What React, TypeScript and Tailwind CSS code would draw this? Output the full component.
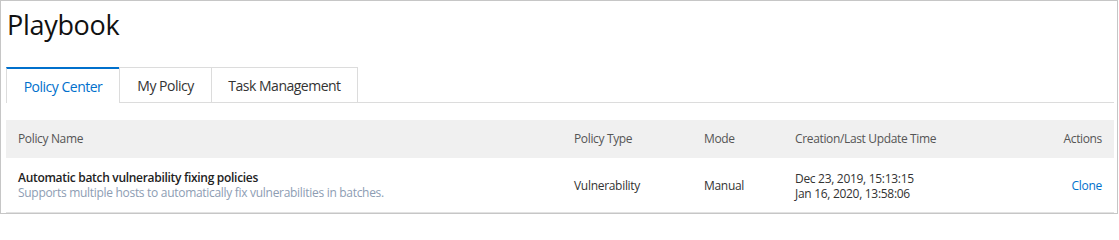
import React from "react";

const font = { fontFamily: '"Open Sans", "Noto Sans", sans-serif' };

export default function App() {
  return (
    <div
      className="w-[1118px] h-[214px] border border-[#c6c6c6] bg-white pl-[5px] pr-[3px] overflow-hidden"
      style={font}
    >
      <div className="h-[66px] pt-[4px]">
        <h1 className="text-[27px] leading-[40px] text-[#111] pl-[1px] tracking-[-0.3px]">Playbook</h1>
      </div>
      <div className="flex h-[36px] border-b border-[#dcdcdc]">
        <div className="w-[113px] h-[36px] border-t-2 border-t-[#0070cc] border-l border-l-[#dcdcdc] bg-white flex items-center justify-center text-[14px] tracking-[-0.5px] text-[#0070cc] -mb-px">
          Policy Center
        </div>
        <div className="w-[92px] h-[35px] border-t border-l border-[#dcdcdc] flex items-center justify-center text-[14px] tracking-[-0.5px] text-[#333]">
          My Policy
        </div>
        <div className="w-[147px] h-[35px] border-t border-l border-r border-[#dcdcdc] flex items-center justify-center text-[14px] tracking-[-0.5px] text-[#333]">
          Task Management
        </div>
      </div>
      <div className="mt-[17px]">
        <div className="grid grid-cols-[556px_130px_91px_1fr_auto] h-[38px] bg-[#f0f0f0] items-center text-[12px] tracking-[-0.35px] text-[#555]">
          <div className="px-3">Policy Name</div>
          <div className="px-3">Policy Type</div>
          <div className="px-3">Mode</div>
          <div className="px-3">Creation/Last Update Time</div>
          <div className="px-3 text-right">Actions</div>
        </div>
        <div className="grid grid-cols-[556px_130px_91px_1fr_auto] h-[55px] border-b border-[#e2e2e2] items-center text-[12px] leading-[15px] tracking-[-0.3px] text-[#333]">
          <div className="px-3">
            <div className="font-semibold text-[#222]">Automatic batch vulnerability fixing policies</div>
            <div className="text-[#8d9db3]">Supports multiple hosts to automatically fix vulnerabilities in batches.</div>
          </div>
          <div className="px-3">Vulnerability</div>
          <div className="px-3">Manual</div>
          <div className="px-3 pt-[2px]">
            <div>Dec 23, 2019, 15:13:15</div>
            <div>Jan 16, 2020, 13:58:06</div>
          </div>
          <div className="px-3 text-right text-[#0070cc]">Clone</div>
        </div>
      </div>
    </div>
  );
}
